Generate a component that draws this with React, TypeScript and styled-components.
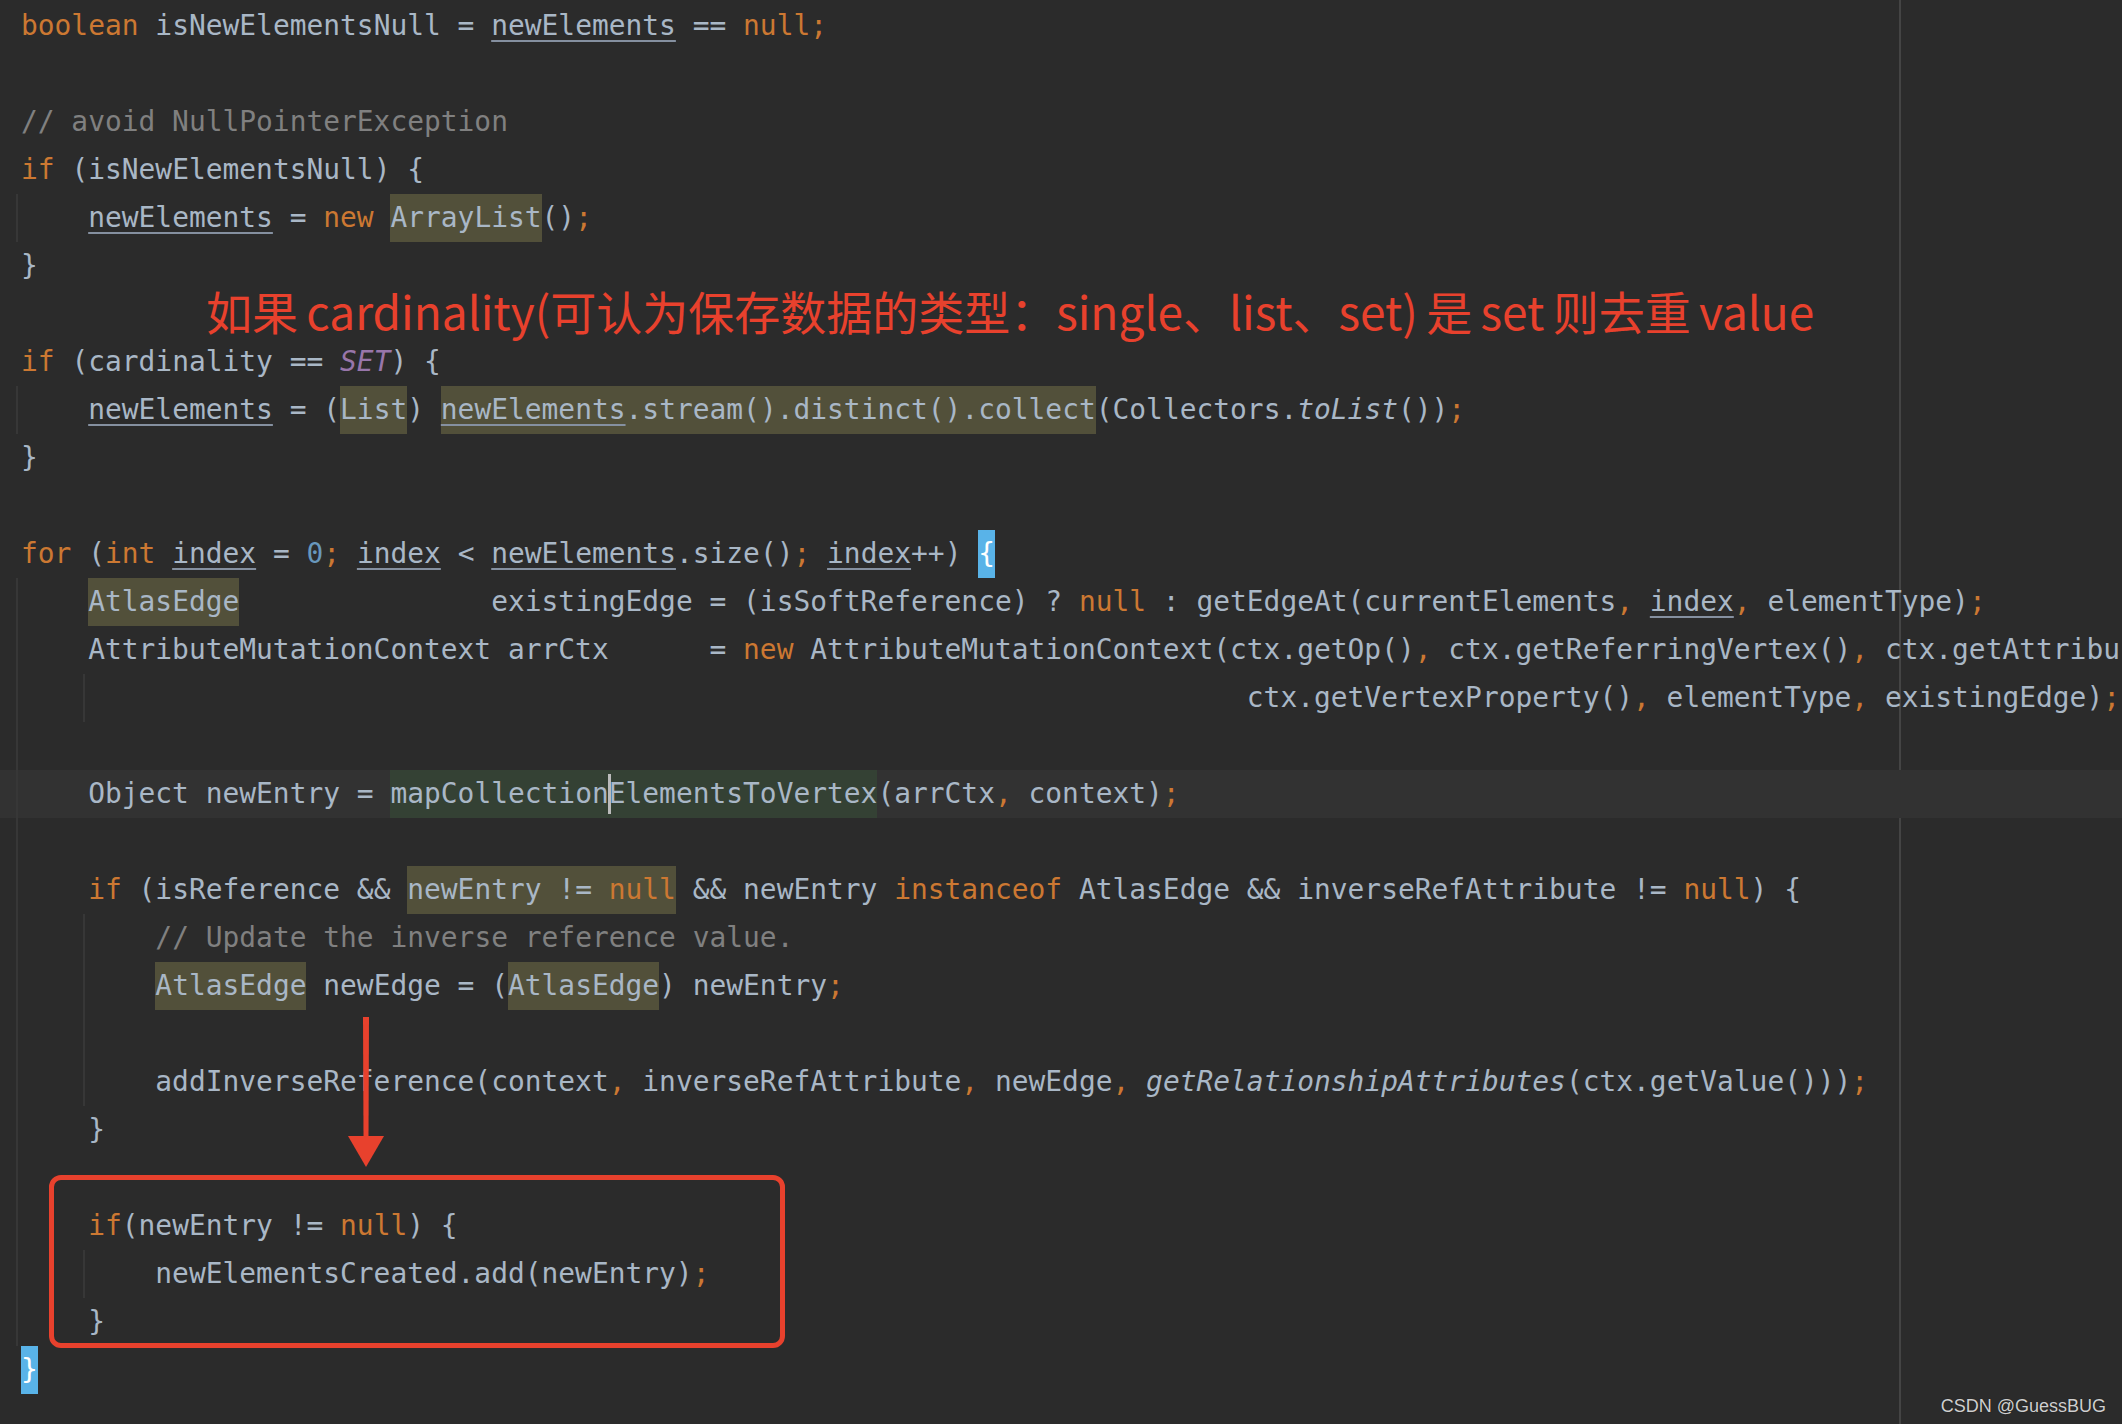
import React from 'react';
import styled, { createGlobalStyle, css } from 'styled-components';

const CH = 16.8;
const LH = 48;

const GlobalStyle = createGlobalStyle`
  html, body { margin: 0; padding: 0; background: #2b2b2b; }
`;

type Kind = 'kw' | 'cmt' | 'num' | 'cst';
type Bg = 'olive' | 'green' | 'brace';
type Seg = { s: string; k?: Kind; ul?: boolean; bg?: Bg; it?: boolean; caret?: boolean };
type LineData = { segs: Seg[]; guides?: number[]; current?: boolean; note?: string };

const colors: Record<Kind | 'plain', string> = {
  plain: '#a9b7c6',
  kw: '#cc7832',
  cmt: '#808080',
  num: '#6897bb',
  cst: '#9876aa',
};

const bgs: Record<Bg, string> = {
  olive: '#52503a',
  green: '#344134',
  brace: '#59b3e8',
};

const Editor = styled.div`
  position: relative;
  display: flex;
  flex-direction: column;
  width: 2122px;
  height: 1424px;
  overflow: hidden;
  box-sizing: border-box;
  padding-top: 2px;
  background: #2b2b2b;
  font-family: 'DejaVu Sans Mono', 'Liberation Mono', monospace;
  font-size: 27.9px;
  color: ${colors.plain};
`;

const MarginGuide = styled.div`
  position: absolute;
  top: 0;
  bottom: 0;
  left: 1899px;
  width: 2px;
  background: #444444;
`;

const Line = styled.div<{ $current?: boolean }>`
  position: relative;
  display: flex;
  align-items: stretch;
  flex: 0 0 ${LH}px;
  height: ${LH}px;
  line-height: ${LH}px;
  padding-left: 21px;
  white-space: pre;
  background: ${(p) => (p.$current ? '#323232' : 'transparent')};
`;

const IndentGuide = styled.span<{ $col: number }>`
  position: absolute;
  top: 0;
  bottom: 0;
  left: ${(p) => 16 + p.$col * CH}px;
  width: 2px;
  background: #373737;
`;

const Tok = styled.span<{ $k?: Kind; $ul?: boolean; $bg?: Bg; $it?: boolean }>`
  height: ${LH}px;
  line-height: ${LH}px;
  color: ${(p) => (p.$bg === 'brace' ? '#ffffff' : colors[p.$k ?? 'plain'])};
  font-style: ${(p) => (p.$it ? 'italic' : 'normal')};
  background: ${(p) => (p.$bg ? bgs[p.$bg] : 'transparent')};
  ${(p) =>
    p.$ul &&
    css`
      text-decoration: underline;
      text-decoration-color: #8590a0;
      text-decoration-thickness: 2px;
      text-underline-offset: 5px;
    `}
`;

const Caret = styled.span`
  position: relative;
  width: 0;
  height: ${LH}px;
  &::after {
    content: '';
    position: absolute;
    left: -1px;
    top: 4px;
    width: 3px;
    height: 40px;
    background: #bbbbbb;
  }
`;

const Annotation = styled.span`
  margin-left: 185px;
  font-family: 'Noto Sans CJK SC', 'Noto Sans', sans-serif;
  font-size: 46px;
  line-height: 40px;
  word-spacing: -2px;
  color: #e8412d;
`;

const RedBox = styled.div`
  position: absolute;
  left: 49px;
  top: 1175px;
  width: 736px;
  height: 173px;
  box-sizing: border-box;
  border: 5px solid #e8412d;
  border-radius: 12px;
`;

const ArrowSvg = styled.svg`
  position: absolute;
  left: 344px;
  top: 1014px;
`;

const Watermark = styled.div`
  position: absolute;
  right: 16px;
  bottom: 7px;
  font-family: 'Liberation Sans', Arial, sans-serif;
  font-size: 18px;
  color: #cfcfcf;
  text-shadow: 0 0 1px rgba(0, 0, 0, 0.6);
`;

const p = (s: string): Seg => ({ s });
const k = (s: string): Seg => ({ s, k: 'kw' });
const u = (s: string): Seg => ({ s, ul: true });
const h = (s: string, extra: Partial<Seg> = {}): Seg => ({ s, bg: 'olive', ...extra });

const lines: LineData[] = [
  { segs: [k('boolean'), p(' isNewElementsNull = '), u('newElements'), p(' == '), k('null'), k(';')] },
  { segs: [] },
  { segs: [{ s: '// avoid NullPointerException', k: 'cmt' }] },
  { segs: [k('if'), p(' (isNewElementsNull) {')] },
  { segs: [p('    '), u('newElements'), p(' = '), k('new'), p(' '), h('ArrayList'), p('()'), k(';')], guides: [0] },
  { segs: [p('}')] },
  { segs: [], note: '如果 cardinality(可认为保存数据的类型：single、list、set) 是 set 则去重 value' },
  { segs: [k('if'), p(' (cardinality == '), { s: 'SET', k: 'cst', it: true }, p(') {')] },
  {
    segs: [
      p('    '),
      u('newElements'),
      p(' = ('),
      h('List'),
      p(') '),
      h('newElements', { ul: true }),
      h('.stream().distinct().collect'),
      p('(Collectors.'),
      { s: 'toList', it: true },
      p('())'),
      k(';'),
    ],
    guides: [0],
  },
  { segs: [p('}')] },
  { segs: [] },
  {
    segs: [
      k('for'),
      p(' ('),
      k('int'),
      p(' '),
      u('index'),
      p(' = '),
      { s: '0', k: 'num' },
      k(';'),
      p(' '),
      u('index'),
      p(' < '),
      u('newElements'),
      p('.size()'),
      k(';'),
      p(' '),
      u('index'),
      p('++) '),
      { s: '{', bg: 'brace' },
    ],
  },
  {
    segs: [
      p('    '),
      h('AtlasEdge'),
      p('               existingEdge = (isSoftReference) ? '),
      k('null'),
      p(' : getEdgeAt(currentElements'),
      k(','),
      p(' '),
      u('index'),
      k(','),
      p(' elementType)'),
      k(';'),
    ],
    guides: [0],
  },
  {
    segs: [
      p('    AttributeMutationContext arrCtx      = '),
      k('new'),
      p(' AttributeMutationContext(ctx.getOp()'),
      k(','),
      p(' ctx.getReferringVertex()'),
      k(','),
      p(' ctx.getAttribu'),
    ],
    guides: [0],
  },
  {
    segs: [
      p(' '.repeat(73)),
      p('ctx.getVertexProperty()'),
      k(','),
      p(' elementType'),
      k(','),
      p(' existingEdge)'),
      k(';'),
    ],
    guides: [0, 4],
  },
  { segs: [], guides: [0] },
  {
    segs: [
      p('    Object newEntry = '),
      { s: 'mapCollection', bg: 'green' },
      { s: '', caret: true },
      { s: 'ElementsToVertex', bg: 'green' },
      p('(arrCtx'),
      k(','),
      p(' context)'),
      k(';'),
    ],
    guides: [0],
    current: true,
  },
  { segs: [], guides: [0] },
  {
    segs: [
      p('    '),
      k('if'),
      p(' (isReference && '),
      h('newEntry != '),
      h('null', { k: 'kw' }),
      p(' && newEntry '),
      k('instanceof'),
      p(' AtlasEdge && inverseRefAttribute != '),
      k('null'),
      p(') {'),
    ],
    guides: [0],
  },
  { segs: [p('        '), { s: '// Update the inverse reference value.', k: 'cmt' }], guides: [0, 4] },
  {
    segs: [p('        '), h('AtlasEdge'), p(' newEdge = ('), h('AtlasEdge'), p(') newEntry'), k(';')],
    guides: [0, 4],
  },
  { segs: [], guides: [0, 4] },
  {
    segs: [
      p('        addInverseReference(context'),
      k(','),
      p(' inverseRefAttribute'),
      k(','),
      p(' newEdge'),
      k(','),
      p(' '),
      { s: 'getRelationshipAttributes', it: true },
      p('(ctx.getValue()))'),
      k(';'),
    ],
    guides: [0, 4],
  },
  { segs: [p('    }')], guides: [0] },
  { segs: [], guides: [0] },
  { segs: [p('    '), k('if'), p('(newEntry != '), k('null'), p(') {')], guides: [0] },
  { segs: [p('        newElementsCreated.add(newEntry)'), k(';')], guides: [0, 4] },
  { segs: [p('    }')], guides: [0] },
  { segs: [{ s: '}', bg: 'brace' }] },
];

const Arrow: React.FC = () => (
  <ArrowSvg width="44" height="160" viewBox="0 0 44 160">
    <path d="M19 3 L25 3 L24.5 124 L19.5 124 Z" fill="#e8412d" />
    <polygon points="4,122 40,122 22,153" fill="#e8412d" />
  </ArrowSvg>
);

export default function App() {
  return (
    <>
      <GlobalStyle />
      <Editor>
        <MarginGuide />
        {lines.map((ln, i) => (
          <Line key={i} $current={ln.current}>
            {(ln.guides ?? []).map((g) => (
              <IndentGuide key={g} $col={g} />
            ))}
            {ln.note && <Annotation>{ln.note}</Annotation>}
            {ln.segs.map((sg, j) =>
              sg.caret ? (
                <Caret key={j} />
              ) : (
                <Tok key={j} $k={sg.k} $ul={sg.ul} $bg={sg.bg} $it={sg.it}>
                  {sg.s}
                </Tok>
              )
            )}
          </Line>
        ))}
        <RedBox />
        <Arrow />
        <Watermark>CSDN @GuessBUG</Watermark>
      </Editor>
    </>
  );
}
